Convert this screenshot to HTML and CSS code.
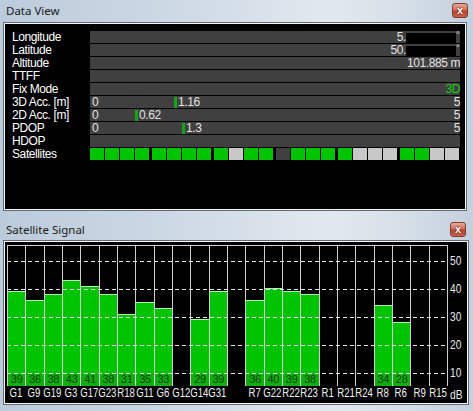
FILE: index.html
```html
<!DOCTYPE html>
<html>
<head>
<meta charset="utf-8">
<title>GPS</title>
<link rel="stylesheet" href="styles.css">
</head>
<body>
<div class="win win-data">
  <div class="titlebar tb1"><span class="title">Data View</span><span class="close">x</span></div>
  <div class="frame frame1">
    <div class="row"><span class="lbl">Longitude</span><div class="bar right"><span>5.</span><span class="redact"></span><span class="deg">°</span></div></div>
    <div class="row"><span class="lbl">Latitude</span><div class="bar right"><span>50.</span><span class="redact"></span><span class="deg">°</span></div></div>
    <div class="row"><span class="lbl">Altitude</span><div class="bar right"><span>101.885 m</span></div></div>
    <div class="row"><span class="lbl">TTFF</span><div class="bar right"></div></div>
    <div class="row"><span class="lbl">Fix Mode</span><div class="bar right"><span class="fix">3D</span></div></div>
    <div class="row"><span class="lbl">3D Acc. [m]</span><div class="bar"><span class="fill" style="width:84px">0</span><span class="marker"></span><span class="gval">1.16</span><span class="max">5</span></div></div>
    <div class="row"><span class="lbl">2D Acc. [m]</span><div class="bar"><span class="fill" style="width:45px">0</span><span class="marker"></span><span class="gval">0.62</span><span class="max">5</span></div></div>
    <div class="row"><span class="lbl">PDOP</span><div class="bar"><span class="fill" style="width:92px">0</span><span class="marker"></span><span class="gval">1.3</span><span class="max">5</span></div></div>
    <div class="row"><span class="lbl">HDOP</span><div class="bar"></div></div>
    <div class="row"><span class="lbl">Satellites</span>
      <div class="sats">
        <div class="grp"><i class="c g"></i><i class="c g"></i><i class="c g"></i><i class="c g"></i></div>
        <div class="grp"><i class="c g"></i><i class="c g"></i><i class="c g"></i><i class="c g"></i></div>
        <div class="grp"><i class="c g"></i><i class="c w"></i><i class="c g"></i><i class="c g"></i></div>
        <div class="grp"><i class="c d"></i><i class="c g"></i><i class="c g"></i><i class="c g"></i></div>
        <div class="grp"><i class="c g"></i><i class="c w"></i><i class="c w"></i><i class="c w"></i></div>
        <div class="grp"><i class="c g"></i><i class="c g"></i><i class="c w"></i><i class="c w"></i></div>
      </div>
    </div>
  </div>
</div>
<div class="win win-sig">
  <div class="titlebar tb2"><span class="title">Satellite Signal</span><span class="close">x</span></div>
  <div class="frame frame2">
    <div class="chart">
      <div class="plotwrap">
        <div class="plot">
          <div class="col"><div class="sbar" style="height:95px"><span class="num">39</span></div></div>
          <div class="col"><div class="sbar" style="height:86px"><span class="num">36</span></div></div>
          <div class="col"><div class="sbar" style="height:92px"><span class="num">38</span></div></div>
          <div class="col"><div class="sbar" style="height:106px"><span class="num">43</span></div></div>
          <div class="col"><div class="sbar" style="height:100px"><span class="num">41</span></div></div>
          <div class="col"><div class="sbar" style="height:92px"><span class="num">38</span></div></div>
          <div class="col"><div class="sbar" style="height:72px"><span class="num">31</span></div></div>
          <div class="col"><div class="sbar" style="height:84px"><span class="num">35</span></div></div>
          <div class="col"><div class="sbar" style="height:78px"><span class="num">33</span></div></div>
          <div class="col"></div>
          <div class="col"><div class="sbar" style="height:67px"><span class="num">29</span></div></div>
          <div class="col"><div class="sbar" style="height:95px"><span class="num">39</span></div></div>
          <div class="col"></div>
          <div class="col"><div class="sbar" style="height:86px"><span class="num">36</span></div></div>
          <div class="col"><div class="sbar" style="height:98px"><span class="num">40</span></div></div>
          <div class="col"><div class="sbar" style="height:95px"><span class="num">39</span></div></div>
          <div class="col"><div class="sbar" style="height:92px"><span class="num">38</span></div></div>
          <div class="col"></div>
          <div class="col"></div>
          <div class="col"></div>
          <div class="col"><div class="sbar" style="height:81px"><span class="num">34</span></div></div>
          <div class="col"><div class="sbar" style="height:64px"><span class="num">28</span></div></div>
          <div class="col"></div>
          <div class="col"></div>
          <div class="dash d50"></div>
          <div class="dash d40"></div>
          <div class="dash d30"></div>
          <div class="dash d20"></div>
          <div class="dash d10"></div>
        </div>
        <div class="xlabels">
          <div class="xl"><span>G1</span></div>
          <div class="xl"><span>G9</span></div>
          <div class="xl"><span>G19</span></div>
          <div class="xl"><span>G3</span></div>
          <div class="xl"><span>G17</span></div>
          <div class="xl"><span>G23</span></div>
          <div class="xl"><span>R18</span></div>
          <div class="xl"><span>G11</span></div>
          <div class="xl"><span>G6</span></div>
          <div class="xl"><span>G12</span></div>
          <div class="xl"><span>G14</span></div>
          <div class="xl"><span>G31</span></div>
          <div class="xl"><span></span></div>
          <div class="xl"><span>R7</span></div>
          <div class="xl"><span>G22</span></div>
          <div class="xl"><span>R22</span></div>
          <div class="xl"><span>R23</span></div>
          <div class="xl"><span>R1</span></div>
          <div class="xl"><span>R21</span></div>
          <div class="xl"><span>R24</span></div>
          <div class="xl"><span>R8</span></div>
          <div class="xl"><span>R6</span></div>
          <div class="xl"><span>R9</span></div>
          <div class="xl"><span>R15</span></div>
        </div>
      </div>
      <div class="axis">
        <span>50</span><span>40</span><span>30</span><span>20</span><span>10</span><span class="db">dB</span>
      </div>
    </div>
  </div>
</div>
</body>
</html>
```
FILE: styles.css
```css
html, body {
  margin: 0;
  padding: 0;
}
body {
  width: 473px;
  height: 411px;
  overflow: hidden;
  background: linear-gradient(90deg, #bccbdb 0%, #ccd8e4 35%, #e2e8ef 70%, #d6dfe8 85%, #c3d0dd 100%);
  font-family: "Liberation Sans", Arial, sans-serif;
}
.win-data {
  height: 213px;
}
.titlebar {
  display: flex;
  justify-content: space-between;
  align-items: flex-start;
  box-sizing: border-box;
  font-family: "Noto Sans", "Open Sans", sans-serif;
  font-size: 11.5px;
  color: #1b1b1b;
}
.tb1 {
  height: 22px;
  padding-left: 6px;
}
.tb1 .title {
  line-height: 22px;
}
.tb2 {
  height: 27px;
  padding: 7px 0 0 6px;
}
.tb2 .title {
  line-height: 20px;
}
.close {
  width: 16px;
  height: 15px;
  box-sizing: border-box;
  border: 1px solid #7d3b32;
  border-radius: 3px;
  background: linear-gradient(180deg, #e9a99c 0%, #d2705f 45%, #b8432f 55%, #c9614c 100%);
  color: #fff;
  font: bold 11px/12px "Liberation Sans", Arial, sans-serif;
  text-align: center;
  text-shadow: 0 0 2px #5a1a10, 0 0 1px #5a1a10;
}
.tb1 .close {
  margin: 3px 5px 0 0;
}
.tb2 .close {
  margin: 2px 7px 0 0;
}
.frame {
  box-sizing: border-box;
  margin-left: 3px;
  border: 1px solid #646a73;
  box-shadow: inset 0 0 0 1px #f4f6f8;
  background: #000;
}
.frame1 {
  width: 464px;
  height: 189px;
  padding: 8px 0 0 8px;
}
.row {
  display: flex;
  height: 12px;
  margin-bottom: 1px;
}
.lbl {
  width: 78px;
  color: #fff;
  font-size: 12px;
  line-height: 12px;
  letter-spacing: -0.4px;
  white-space: nowrap;
}
.bar {
  width: 370px;
  height: 12px;
  background: #404040;
  display: flex;
  align-items: center;
  color: #e4e4e4;
  font-size: 12px;
  line-height: 12px;
  letter-spacing: -0.4px;
  white-space: nowrap;
}
.bar.right {
  justify-content: flex-end;
}
.redact {
  width: 50px;
  height: 10px;
  margin-top: 2px;
  background: #000;
}
.deg {
  width: 4px;
  font-size: 9px;
  align-self: flex-start;
  line-height: 8px;
}
.fix {
  color: #12d212;
}
.fill {
  box-sizing: border-box;
  padding-left: 2px;
  flex: none;
}
.marker {
  width: 3px;
  height: 11px;
  background: #13a813;
  flex: none;
}
.gval {
  margin-left: 1px;
}
.max {
  margin-left: auto;
}
.sats {
  display: flex;
  gap: 3px;
  height: 12px;
}
.grp {
  display: flex;
  gap: 1px;
}
.c {
  display: block;
  width: 14px;
  height: 12px;
}
.c.g { background: #00c400; }
.c.w { background: #c8c8c8; }
.c.d { background: #404040; }

.frame2 {
  width: 466px;
  height: 165px;
  padding: 4px 0 0 3px;
}
.chart {
  display: flex;
}
.plotwrap {
  width: 441px;
}
.plot {
  position: relative;
  height: 141px;
  box-sizing: border-box;
  border-top: 1px solid #cfcfcf;
  border-right: 1px solid #cfcfcf;
  display: grid;
  grid-template-columns: repeat(24, 1fr);
}
.col {
  border-left: 1px solid #cfcfcf;
  display: flex;
  flex-direction: column;
  justify-content: flex-end;
  min-width: 0;
}
.sbar {
  box-sizing: border-box;
  background: #00c400;
  border-top: 1px solid #aef0ae;
  display: flex;
  flex-direction: column;
  justify-content: flex-end;
}
.num {
  height: 13px;
  background: #10ae10;
  color: #0f3f0f;
  font-size: 11px;
  line-height: 13px;
  text-align: center;
  letter-spacing: -0.3px;
}
.dash {
  position: absolute;
  left: 0;
  right: 0;
  height: 1px;
  background: repeating-linear-gradient(90deg, #e6e6e6 0 4px, transparent 4px 7px);
}
.d50 { top: 15px; }
.d40 { top: 43px; }
.d30 { top: 71px; }
.d20 { top: 99px; }
.d10 { top: 127px; }
.xlabels {
  width: 440px;
  height: 15px;
  display: grid;
  grid-template-columns: repeat(24, 1fr);
  background: #000;
}
.xl {
  display: flex;
  justify-content: center;
  min-width: 0;
}
.xl span {
  display: block;
  white-space: nowrap;
  color: #f0f0f0;
  font-size: 12px;
  line-height: 15px;
  transform: scaleX(0.8);
}
.axis {
  width: 16px;
  padding: 2px 0 0 2px;
  display: flex;
  flex-direction: column;
}
.axis span {
  height: 28px;
  line-height: 28px;
  font-size: 12px;
  color: #e8e8e8;
  white-space: nowrap;
  transform: scaleX(0.85);
  transform-origin: left center;
}
.axis span.db {
  height: 15px;
  line-height: 16px;
}
```
